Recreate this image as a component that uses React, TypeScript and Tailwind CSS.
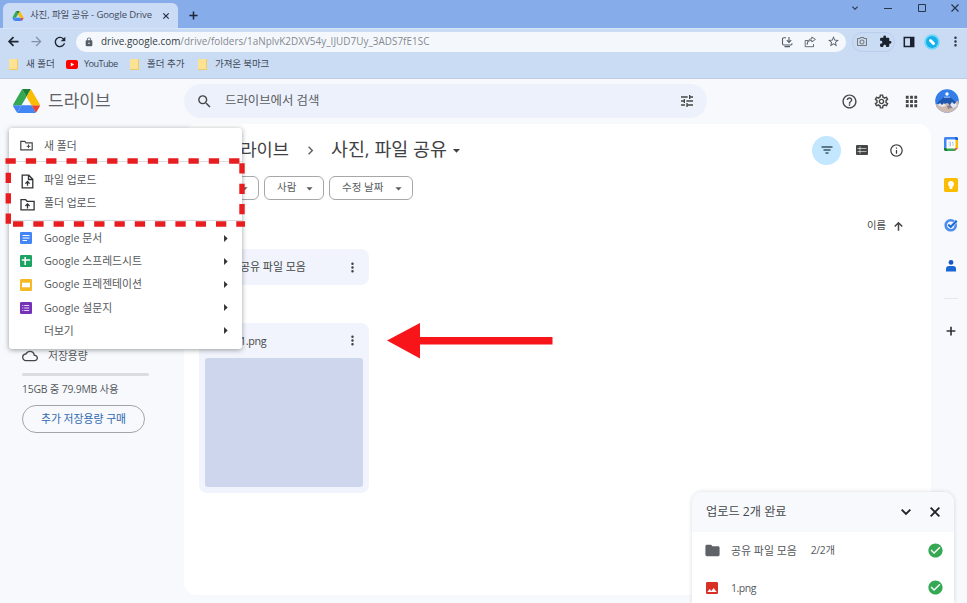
import type { ReactNode } from "react";
import {
  MdApps,
  MdArrowDropDown,
  MdArrowForward,
  MdArrowRight,
  MdCheckCircle,
  MdChevronRight,
  MdExpandMore,
  MdExtension,
  MdFolder,
  MdHelpOutline,
  MdImage,
  MdInfoOutline,
  MdLock,
  MdMoreVert,
  MdOutlineCameraAlt,
  MdOutlineCloud,
  MdOutlineSettings,
  MdRefresh,
  MdSearch,
  MdStarBorder,
  MdTune,
} from "react-icons/md";

// 24x24 outline icon with a heavier line than the icon font
function LineIcon({ d, className }: { d: string; className: string }) {
  return (
    <svg viewBox="0 0 24 24" className={className} fill="none" stroke="currentColor" strokeWidth="2.8">
      <path d={d} />
    </svg>
  );
}

const plus = "M12 4.500v15M4.500 12h15";
const cross = "m5.500 5.500 13 13m0-13-13 13";
const arrowUp = "M12 20V5.500M5 12l7-7 7 7";
const arrowLeft = "M20 12H5.500M12 5l-7 7 7 7";
const chevronDown = "m5.500 8.500 6.500 6.500 6.500-6.500";

function DriveLogo({ className }: { className: string }) {
  return (
    <svg viewBox="0 0 87.3 78" className={className}>
      <path fill="#4285f4" d="m6.6 66.85 3.85 6.65c.8 1.4 1.95 2.5 3.3 3.3l13.75-23.8h-27.5c0 1.55.4 3.1 1.2 4.5z" />
      <path fill="#34a853" d="m43.65 25-13.75-23.8c-1.35.8-2.5 1.9-3.3 3.3l-25.4 44a9.06 9.06 0 0 0-1.2 4.5h27.5z" />
      <path fill="#ea4335" d="m73.55 76.8c1.35-.8 2.5-1.9 3.3-3.3l1.6-2.75 7.65-13.25c.8-1.4 1.2-2.95 1.2-4.5h-27.5l5.85 11.5z" />
      <path fill="#188038" d="m43.65 25 13.75-23.8c-1.35-.8-2.9-1.2-4.5-1.2h-18.5c-1.6 0-3.15.45-4.5 1.2z" />
      <path fill="#4285f4" d="m59.8 53h-32.3l-13.75 23.8c1.35.8 2.9 1.2 4.5 1.2h50.8c1.6 0 3.15-.45 4.5-1.2z" />
      <path fill="#fbbc04" d="m73.4 26.5-12.7-22c-.8-1.4-1.95-2.5-3.3-3.3l-13.75 23.8 16.15 28h27.45c0-1.55-.4-3.1-1.2-4.5z" />
    </svg>
  );
}

function TabStrip() {
  return (
    <div className="flex h-7 shrink-0 bg-[#86ace9] pl-[3px]">
      <div className="mt-[3px] flex h-[25px] w-[175px] items-center rounded-t-[6px] bg-[#cadbf5] pl-[9px]">
        <DriveLogo className="h-[10px] w-3 shrink-0" />
        <span className="ml-[6px] w-[130px] text-[9.5px] tracking-[-0.12px] whitespace-nowrap text-[#3f4a5a]">사진, 파일 공유 - Google Drive</span>
        <LineIcon d={cross} className="ml-[1px] size-[10px] shrink-0 text-[#252c38]" />
      </div>
      <LineIcon d={plus} className="mt-[9px] ml-[9px] size-[13px] text-[#1d2738]" />
      <div className="ml-auto flex h-4 items-center pr-[7px] text-[#28354c]">
        <MdExpandMore className="size-[12px]" />
        <svg viewBox="0 0 10 10" className="ml-[22px] size-[10px]">
          <path d="M1 5.5h8" stroke="currentColor" />
        </svg>
        <svg viewBox="0 0 10 10" className="ml-[24px] size-[10px]">
          <path d="M1.5 1.5h7v7h-7z" fill="none" stroke="currentColor" />
        </svg>
        <svg viewBox="0 0 10 10" className="ml-[23px] size-[10px]">
          <path d="m1.5 1.5 7 7m0-7-7 7" stroke="currentColor" strokeWidth="1.2" />
        </svg>
      </div>
    </div>
  );
}

function AddressBar() {
  return (
    <div className="flex h-[26px] shrink-0 items-center border-t border-[#d6e3f8] bg-[#cadbf4] pl-[6px]">
      <LineIcon d={arrowLeft} className="size-[15px] text-[#1f2733]" />
      <MdArrowForward className="ml-[8px] size-[15px] text-[#8291a9]" />
      <MdRefresh className="ml-[8px] size-[16px] text-[#1f2733]" />
      <div className="ml-[8px] flex h-5 w-[770px] items-center rounded-full bg-[#f4f8fd] pl-[8px] text-[#555d68]">
        <MdLock className="size-[10px]" />
        <span className="ml-[7px] w-[340px] whitespace-nowrap text-[9.9px] tracking-[0.04px] text-[#85898f]">
          <span className="text-[#333a43]">drive.google.com</span>/drive/folders/1aNplvK2DXV54y_IJUD7Uy_3ADS7fE1SC
        </span>
        <div className="ml-auto flex items-center pr-[6px]">
          {/* install */}
          <svg viewBox="0 0 12 12" className="size-3" fill="none" stroke="currentColor" strokeWidth="1.1">
            <path d="M5 1.800H2.700Q1.500 1.800 1.500 3v4.800Q1.500 9 2.700 9h7.100Q11 9 11 7.800V7.300M3.500 10.600h5.500M8 1v5M5.800 4.200 8 6.400l2.200-2.200" />
          </svg>
          {/* share */}
          <svg viewBox="0 0 12 12" className="ml-[11px] size-3" fill="none" stroke="currentColor" strokeWidth="0.9">
            <path d="M4 4.5H1.2v6.2h8.3V8M3.2 8.5C3.5 5.5 5 4.3 7.8 4.3V6L11.4 3.4 7.8 1v1.7C4.8 2.8 3.3 5 3.2 8.5z" />
          </svg>
          <MdStarBorder className="ml-[11px] size-[13px]" />
        </div>
      </div>
      <div className="ml-[6px] flex h-5 w-[43px] items-center rounded-full border border-[#b9cdef] pl-[3px]">
        <MdOutlineCameraAlt className="size-[12px] text-[#777]" />
        <MdExtension className="ml-[11px] size-[13px] text-[#1a222e]" />
      </div>
      <svg viewBox="0 0 12 12" className="ml-[8px] size-3 text-[#1a222e]">
        <path d="M1.3 1.5h9.4v9H1.3z" fill="none" stroke="currentColor" strokeWidth="1.5" />
        <path d="M7 1.5h3.7v9H7z" fill="currentColor" />
      </svg>
      <svg viewBox="0 0 16 16" className="ml-[9px] size-4">
        <circle cx="8" cy="8" r="7.8" fill="#73d6f8" />
        <circle cx="8" cy="8" r="6" fill="#16b1ec" />
        <path d="m6.5 6.5 3 3" stroke="#fff" strokeWidth="3" strokeLinecap="round" />
      </svg>
      <MdMoreVert className="ml-[8px] size-[15px] text-[#303a49]" />
    </div>
  );
}

function YellowFolder() {
  return <div className="h-[11px] w-[9px] shrink-0 rounded-[1px] border-r border-b border-[#eccb67] bg-[#fde293]" />;
}

function Bookmarks() {
  return (
    <div className="flex h-[25px] shrink-0 items-center border-b border-[#bccbe6] bg-[#cadbf4] pb-[4px] pl-[9px] text-[9.5px] whitespace-nowrap text-[#3d4755]">
      <YellowFolder />
      <span className="ml-[8px] w-[40px]">새 폴더</span>
      <svg viewBox="0 0 12 9" className="h-[9px] w-3">
        <rect width="12" height="9" rx="2" fill="#f00" />
        <path d="m4.8 2.6 3.4 1.9-3.4 1.9z" fill="#fff" />
      </svg>
      <span className="ml-[6px] w-[46px] text-[9.2px] tracking-[-0.6px]">YouTube</span>
      <YellowFolder />
      <span className="ml-[8px] w-[51px]">폴더 추가</span>
      <YellowFolder />
      <span className="ml-[8px] tracking-[-0.1px]">가져온 북마크</span>
    </div>
  );
}

function DriveHeader() {
  return (
    <header className="flex h-[45px] shrink-0 items-center pl-[13px] text-[#444746]">
      <DriveLogo className="mb-[1px] h-6 w-[27px]" />
      <span className="mb-[3px] ml-[8px] w-[136px] text-[17px] leading-none text-[#5f6368]">드라이브</span>
      <div className="mb-[1px] flex h-[34px] w-[523px] items-center rounded-full bg-[#edf1fb] pr-[12px] pl-[12px]">
        <MdSearch className="size-[17px]" />
        <span className="ml-[12px] text-[12.4px] text-[#5a5e63]">드라이브에서 검색</span>
        <MdTune className="ml-auto size-[16px]" />
      </div>
      <MdHelpOutline className="mb-[1px] ml-[134px] size-[17px]" />
      <MdOutlineSettings className="mb-[1px] ml-[15px] size-[17px]" />
      <MdApps className="mb-[1px] ml-[13px] size-[17px]" />
      <svg viewBox="0 0 24 24" className="mb-[2px] ml-[15px] size-6">
        <defs>
          <clipPath id="avatar">
            <circle cx="12" cy="12" r="11.8" />
          </clipPath>
        </defs>
        <g clipPath="url(#avatar)">
          <path fill="#347ee9" d="M0 0h24v24H0z" />
          <path fill="#2057ae" d="M3 13 9 8h6l7 6v3H2z" />
          <path fill="#cdb9b0" d="M0 16q3-2 5 0t5-1 5 2 5-2 4 1v9H0z" />
          <path fill="#e8e7ed" d="m3 16 2-2 2 2 2-2 2 3-4 1zM15 16l2-3 2 2 2-1 1 3-4 2z" />
          <path fill="#947d7a" d="m12 17 3-1 1 3-3 1z" />
          <circle cx="12" cy="5" r="1.7" fill="#fff" />
          <path d="M9 8.2h6" stroke="#a8c8fa" />
        </g>
      </svg>
    </header>
  );
}

function Sidebar() {
  return (
    <aside className="w-[184px] shrink-0 pt-[224px] pl-[22px] text-[10.8px] text-[#555a5f]">
      <div className="flex h-4 items-center">
        <MdOutlineCloud className="size-4 text-[#444746]" />
        <span className="ml-[10px]">저장용량</span>
      </div>
      <div className="mt-[9px] h-[3px] w-[127px] rounded bg-[#dadce0]" />
      <div className="mt-[5px] h-4 text-[10.4px] leading-4 tracking-[-0.2px] whitespace-nowrap">15GB 중 79.9MB 사용</div>
      <button className="mt-[8px] h-7 w-[123px] rounded-full border border-[#a2a5a8] text-[10.8px] text-[#3169b0]">추가 저장용량 구매</button>
    </aside>
  );
}

function FilterChip({ label, className }: { label: string; className: string }) {
  return (
    <div className={`flex h-6 items-center justify-between rounded-[6px] border border-[#a5a7a9] pr-[6px] pl-3 text-[10.5px] text-[#5a5e62] ${className}`}>
      {label}
      <MdArrowDropDown className="size-[15px]" />
    </div>
  );
}

function FilesPanel() {
  return (
    <main className="h-[471px] w-[747px] rounded-[13px] bg-white pl-[15px] text-[#444746]">
      <div className="flex h-[52px] items-center text-[18.4px] whitespace-nowrap text-[#3f4245]">
        <span className="mb-[2px] w-[90px] text-right text-[17.6px]">내 드라이브</span>
        <MdChevronRight className="ml-[13px] size-[17px] text-[#5f6368]" />
        <span className="mb-[2px] ml-[12px]">사진, 파일 공유</span>
        <MdArrowDropDown className="ml-[1px] size-[17px]" />
        <div className="ml-auto flex items-center pr-[27px]">
          <div className="flex size-[29px] items-center justify-center rounded-full bg-[#c2e7ff]">
            <svg viewBox="0 0 12 8" className="h-2 w-3">
              <path d="M.5 1h11M2.500 4h7M4.500 7h3" stroke="#3f5563" strokeWidth="1.500" />
            </svg>
          </div>
          <svg viewBox="0 0 12 10" className="ml-[15px] h-[10px] w-3">
            <rect width="12" height="10" rx="1" fill="#444746" />
            <path d="M1.5 3.5h9M1.5 6.5h9M4 1.3v7.4" stroke="#fff" strokeWidth="0.6" />
          </svg>
          <MdInfoOutline className="ml-[21px] size-[15px]" />
        </div>
      </div>
      <div className="flex gap-[5px]">
        <FilterChip label="유형" className="w-[60px]" />
        <FilterChip label="사람" className="w-[60px]" />
        <FilterChip label="수정 날짜" className="w-[84px]" />
      </div>
      <div className="mt-[16px] flex h-5 items-center justify-end gap-[6px] pr-[26px] text-[10.3px]">
        이름
        <LineIcon d={arrowUp} className="size-[13px]" />
      </div>
      <div className="mt-[13px] flex h-9 w-[170px] items-center rounded-[8px] bg-[#f1f4fc] pl-[15px] text-[10.9px]">
        <MdFolder className="size-[15px]" />
        <span className="ml-[11px]">공유 파일 모음</span>
        <MdMoreVert className="mr-[9px] ml-auto size-[15px]" />
      </div>
      <div className="mt-[38px] h-[170px] w-[170px] rounded-[8px] bg-[#f1f4fc] px-[6px]">
        <div className="flex h-[35px] items-center pl-[9px] text-[10.8px] tracking-[-0.35px]">
          <MdImage className="size-[15px] text-[#d93025]" />
          <span className="mt-[1px] ml-[11px]">1.png</span>
          <MdMoreVert className="mr-[3px] ml-auto size-[15px]" />
        </div>
        <div className="h-[129px] rounded-[3px] bg-[#ced6ed]" />
      </div>
    </main>
  );
}

function AppRail() {
  return (
    <div className="flex w-9 flex-col items-center pt-[13px] pl-[4px]">
      {/* Calendar */}
      <svg viewBox="0 0 14 14" className="size-[14px]">
        <path fill="#4285f4" d="M1 0h10v3H3v8H0V1z" />
        <path fill="#1967d2" d="M11 0h2l1 1v2h-3z" />
        <path fill="#fbbc04" d="M11 3h3v8h-3z" />
        <path fill="#34a853" d="M3 11h8v3H3z" />
        <path fill="#188038" d="M0 11h3v3H1l-1-1z" />
        <path fill="#ea4335" d="M11 11h3l-3 3z" />
        <path fill="#fff" d="M2.500 2.500h9v9h-9z" />
        <path d="M4.500 5h2v4h-2m0-2h2M8 5.500 9 5v4" fill="none" stroke="#8fb4f5" strokeWidth="0.7" />
      </svg>
      {/* Keep */}
      <svg viewBox="0 0 14 14" className="mt-[27px] size-[14px]">
        <rect width="14" height="14" rx="1.5" fill="#fbbc04" />
        <circle cx="7" cy="6" r="2.9" fill="#fff" />
        <path fill="#fff" d="M5.600 8h2.800v3H5.600z" />
      </svg>
      {/* Tasks */}
      <svg viewBox="0 0 14 14" className="mt-[26px] size-[14px]">
        <circle cx="6.7" cy="7.2" r="5" fill="none" stroke="#4a8df0" strokeWidth="2.6" />
        <path d="m4.3 6.6 2.4 2.3 6-6.2" fill="none" stroke="#cfe0fb" strokeWidth="3.2" />
        <path d="m4.3 6.6 2.4 2.3 6-6.2" fill="none" stroke="#1a66d6" strokeWidth="2" />
      </svg>
      {/* Contacts */}
      <svg viewBox="0 0 14 14" className="mt-[27px] size-[14px]">
        <circle cx="7" cy="3.4" r="2.4" fill="#1a56c4" />
        <path fill="#1967d2" d="M2 12.400V10q0-3 3-3h4q3 0 3 3v2.400z" />
      </svg>
      <div className="mt-[25px] h-px w-[14px] bg-[#e4e7ed]" />
      <LineIcon d={plus} className="mt-[25px] size-[14px] text-[#303336]" />
    </div>
  );
}

function MenuRow({ icon, label, arrow }: { icon?: ReactNode; label: string; arrow?: boolean }) {
  return (
    <div className="flex h-[23.2px] items-center pr-[8px] pl-[9px]">
      <div className="flex w-4 justify-center">{icon}</div>
      <span className="ml-[10px]">{label}</span>
      {arrow && <MdArrowRight className="ml-auto size-[17px] text-[#303336]" />}
    </div>
  );
}

const docTypes = [
  {
    label: "Google 문서",
    icon: (
      <svg viewBox="0 0 12 12" className="size-3">
        <rect width="12" height="12" rx="1.2" fill="#4285f4" />
        <path d="M2.5 3.5h7M2.5 6h7M2.5 8.5h4.5" stroke="#fff" />
      </svg>
    ),
  },
  {
    label: "Google 스프레드시트",
    icon: (
      <svg viewBox="0 0 12 12" className="size-3">
        <rect width="12" height="12" rx="1.2" fill="#1da362" />
        <path d="M1.8 5h8.4M5.2 2v8" stroke="#fff" strokeWidth="1.6" />
      </svg>
    ),
  },
  {
    label: "Google 프레젠테이션",
    icon: (
      <svg viewBox="0 0 12 12" className="size-3">
        <rect width="12" height="12" rx="1.2" fill="#f4b924" />
        <path d="M2 3.7h8v4.6H2z" fill="#fff" />
      </svg>
    ),
  },
  {
    label: "Google 설문지",
    icon: (
      <svg viewBox="0 0 12 12" className="size-3">
        <rect width="12" height="12" rx="1.2" fill="#7532b8" />
        <path d="M4.2 3.5h5M4.2 6h5M4.2 8.5h5M2.3 3.5h1M2.3 6h1M2.3 8.5h1" stroke="#e8d9f7" />
      </svg>
    ),
  },
  { label: "더보기", icon: undefined },
];

function NewMenu() {
  return (
    <div className="absolute top-[128px] left-[9px] h-[221px] w-[233px] rounded-[3px] bg-white pt-[6px] text-[10.8px] whitespace-nowrap text-[#55585b] shadow-[0_1px_5px_rgba(60,64,67,0.5)]">
      <MenuRow
        label="새 폴더"
        icon={
          <svg viewBox="0 0 13 11" className="h-[11px] w-[13px] text-[#444746]" fill="none" stroke="currentColor">
            <path d="M.8 1.300h4l1.200 1.500h6.200v7H.8z" strokeWidth="1.2" />
            <path d="M8.500 4.500v3.600M6.700 6.300h3.600" />
          </svg>
        }
      />
      <div className="mt-[4px] mb-[6px] h-px bg-[#dadce0]" />
      <MenuRow
        label="파일 업로드"
        icon={
          <svg viewBox="0 0 13 15" className="mt-[3px] ml-[2px] h-[15px] w-[13px] shrink-0 text-[#303336]" fill="none" stroke="currentColor" strokeWidth="1.3">
            <path d="M1.200 1.200h6.600l4 4v8.600H1.200zM7.500 1.500v4h4" />
            <path d="M6.500 11.800V7.700M4.400 9.600l2.100-2.100 2.100 2.100" />
          </svg>
        }
      />
      <MenuRow
        label="폴더 업로드"
        icon={
          <svg viewBox="0 0 15 13" className="mt-[4px] ml-[2px] h-[13px] w-[15px] shrink-0 text-[#303336]" fill="none" stroke="currentColor" strokeWidth="1.3">
            <path d="M1 1.600h4.600l1.500 1.700h7v8.500H1z" />
            <path d="M7.500 10.400V6.200M5.400 8l2.100-2.100L9.600 8" />
          </svg>
        }
      />
      <div className="mt-[5px] mb-[6px] h-px bg-[#dadce0]" />
      {docTypes.map((item) => (
        <MenuRow key={item.label} label={item.label} icon={item.icon} arrow />
      ))}
    </div>
  );
}

function Annotations() {
  return (
    <>
      <svg viewBox="0 0 242 70" className="absolute top-[158px] left-[4px] h-[70px] w-[242px]" fill="none" stroke="#e81d20" strokeWidth="5.4">
        <path d="M1.5 3H236.5" strokeDasharray="10.3 10.03" />
        <path d="M238 5.3V58" strokeDasharray="10.3 10.03" />
        <path d="M4.3 14.8V67" strokeDasharray="10.3 10.03" />
        <path d="M9 66H241" strokeDasharray="10.3 10" />
      </svg>
      <svg viewBox="0 0 166 36" className="absolute top-[323px] left-[387px] h-9 w-[166px]" fill="#f81519">
        <path d="M0 17.5 33 0v14h132.500v7.500H33V35.500z" />
      </svg>
    </>
  );
}

function UploadToast() {
  return (
    <div className="absolute top-[492px] left-[692px] h-[111px] w-[262px] overflow-hidden rounded-t-[10px] bg-white text-[10.9px] whitespace-nowrap text-[#55585b] shadow-[0_0_4px_rgba(60,64,67,0.2)]">
      <div className="flex h-10 items-center bg-[#f8f9fd] pr-[11px] pl-[14px] text-[12.2px] text-[#45484b]">
        <span className="mt-[1px]">업로드 2개 완료</span>
        <LineIcon d={chevronDown} className="ml-auto size-[16px] text-[#202326]" />
        <LineIcon d={cross} className="ml-[13px] size-[16px] text-[#202326]" />
      </div>
      <div className="flex h-[37px] items-center pr-[10px] pl-[12px]">
        <MdFolder className="size-[17px] text-[#5f6368]" />
        <span className="mt-[1px] ml-[10px]">공유 파일 모음</span>
        <span className="mt-[1px] ml-[14px] text-[10.3px] tracking-[-0.3px]">2/2개</span>
        <MdCheckCircle className="ml-auto size-[17px] text-[#34a853]" />
      </div>
      <div className="flex h-[37px] items-center pr-[10px] pl-[12px]">
        <MdImage className="size-[16px] text-[#d93025]" />
        <span className="mt-[2px] ml-[11px] text-[10.5px] tracking-[-0.5px]">1.png</span>
        <MdCheckCircle className="ml-auto size-[17px] text-[#34a853]" />
      </div>
    </div>
  );
}

export default function App() {
  return (
    <div className="relative flex h-[603px] w-[967px] flex-col overflow-hidden bg-[#f8f9fd] font-['Open_Sans','Noto_Sans_CJK_KR',sans-serif]">
      <TabStrip />
      <AddressBar />
      <Bookmarks />
      <DriveHeader />
      <div className="flex min-h-0 flex-1">
        <Sidebar />
        <FilesPanel />
        <AppRail />
      </div>
      <NewMenu />
      <Annotations />
      <UploadToast />
    </div>
  );
}
